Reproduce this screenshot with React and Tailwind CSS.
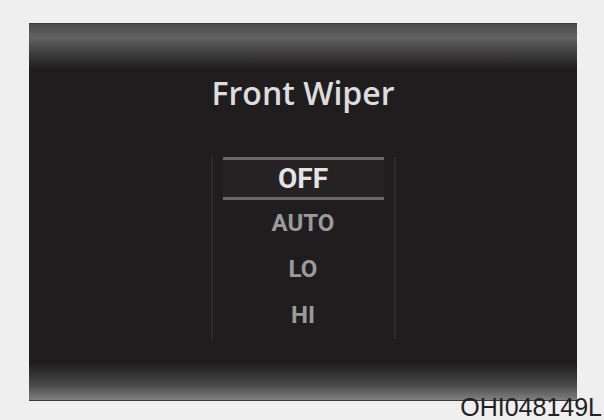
const modes = ["OFF", "AUTO", "LO", "HI"];

export default function App() {
  const active = "OFF";

  return (
    <div className="w-[604px] h-[420px] bg-[#efefef] flex flex-col overflow-hidden">
      {/* cluster display */}
      <div className="ml-[29px] mt-[23px] w-[548px] h-[378px] flex flex-col bg-[#1f1d1e] border-t border-[#3a3a3a]">
        <div className="h-[45px] bg-gradient-to-b from-[#4a4a4a] via-[#626262] via-30% to-[#1f1d1e]" />

        <div className="flex-1 flex flex-col items-center">
          <h1 className="mt-[8px] text-[32px] leading-none font-semibold text-[#dcdcdc] font-['Open_Sans',sans-serif]">
            Front Wiper
          </h1>

          <div className="mt-[48px] w-[185px] h-[182px] border-x-2 border-[#2e2c2d] px-[10px] font-['Roboto',sans-serif] font-bold">
            {modes.map((m) =>
              m === active ? (
                <div
                  key={m}
                  className="h-[43px] flex items-center justify-center bg-[#252324] border-y-[3px] border-[#686868] text-[28px] leading-none text-[#e4e4e4]"
                >
                  {m}
                </div>
              ) : (
                <div
                  key={m}
                  className="h-[46px] flex items-center justify-center text-[24px] leading-none text-[#9a9a9a]"
                >
                  {m}
                </div>
              )
            )}
          </div>
        </div>

        <div className="h-[38px] bg-gradient-to-b from-[#1f1d1e] via-[#4a4a4a] via-60% to-[#808080] border-b border-[#3a3a3a]" />
      </div>

      <div className="mt-[-6px] pr-[2px] self-end text-[25px] leading-none text-[#222] font-['Liberation_Sans',Arial,sans-serif]">
        OHI048149L
      </div>
    </div>
  );
}
